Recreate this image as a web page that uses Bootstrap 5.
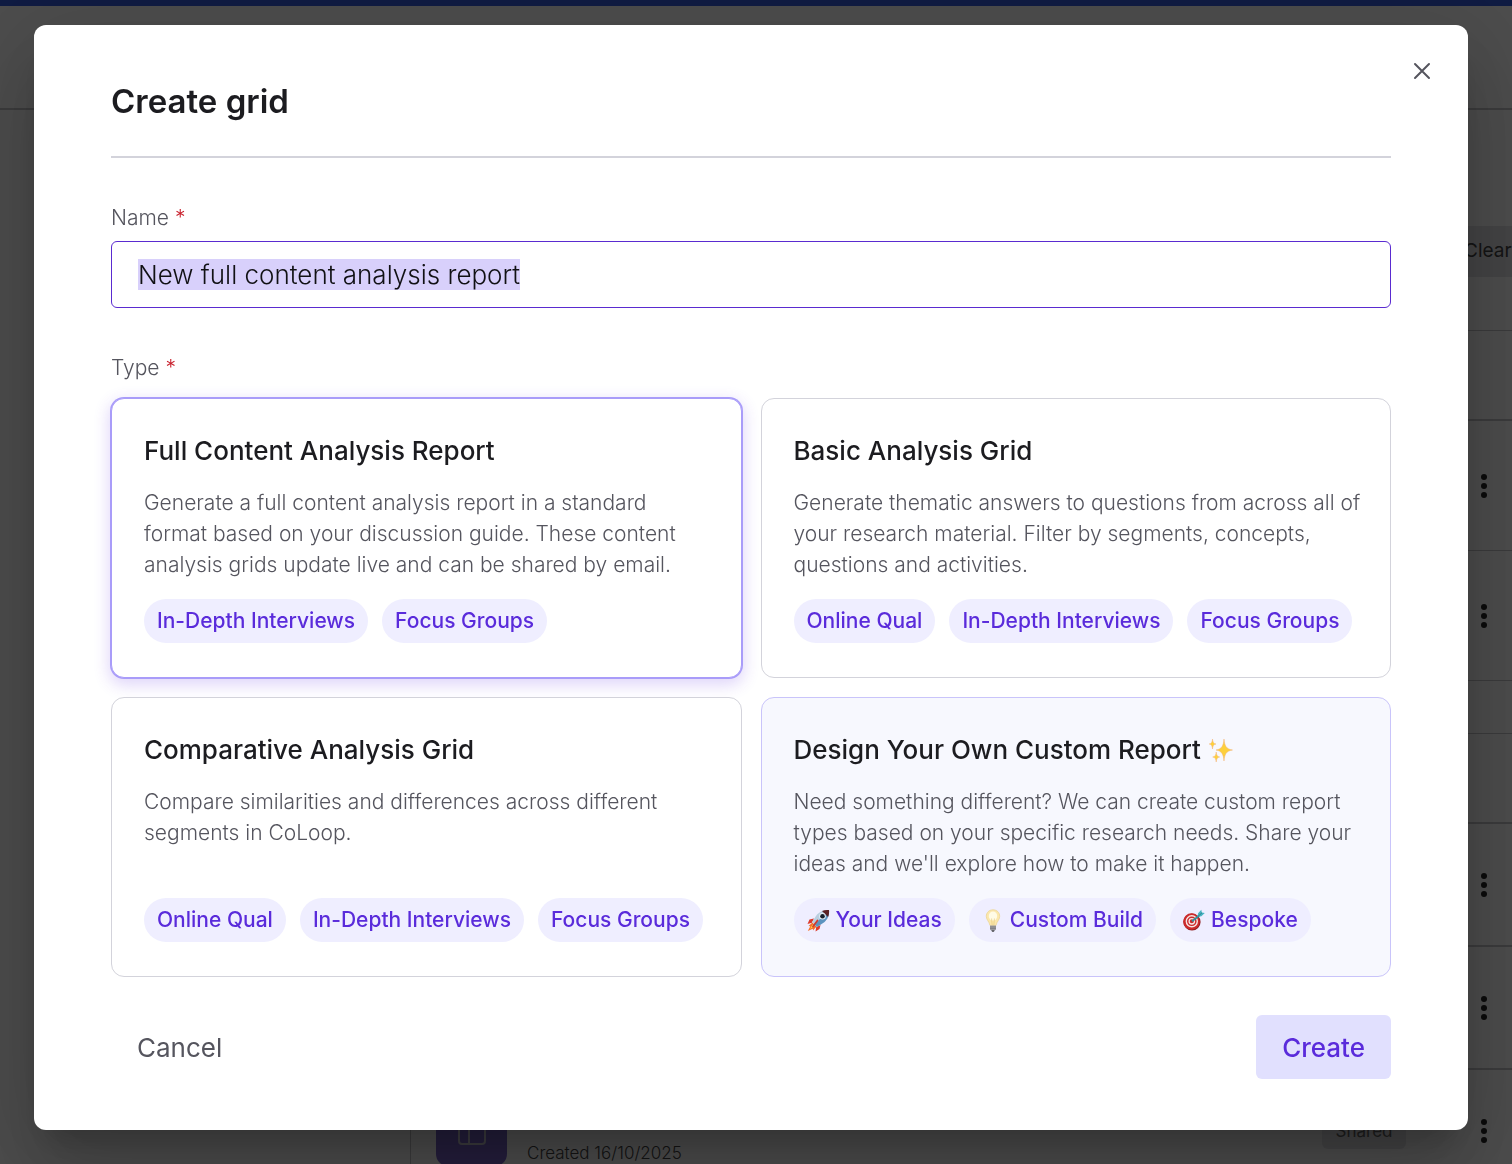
<!DOCTYPE html>
<html lang="en">
<head>
<meta charset="utf-8">
<meta name="viewport" content="width=device-width, initial-scale=1">
<title>Create grid</title>
<link href="https://cdn.jsdelivr.net/npm/bootstrap@5.3.0/dist/css/bootstrap.min.css" rel="stylesheet">
<style>
  body { font-family: Inter, "Noto Sans", sans-serif; color: #1c1c20; }
  ::selection { background: #d8d0fb; color: #111114; }

  /* page behind the dialog */
  .app-page { height: 100vh; overflow: hidden; background: #fff; }
  .app-strip { height: 6px; background: #355adc; }
  .app-header { height: 104px; border-bottom: 2px solid #c4c4c8; }
  .app-side { width: 410px; }
  .app-main { border-left: 1px solid #c4c4c8; }
  .app-tools { height: 221px; border-bottom: 1px solid #c4c4c8; padding-top: 116px; }
  .btn-clear { width: 62px; height: 51px; padding: 0 0 0 14px; background: #e2e2e6; color: #444; font-size: 19px; text-align: left; border: 0; border-radius: 6px 0 0 6px; }
  .line-head { height: 90px; border-bottom: 2px solid #c4c4c8; }
  .line-gap { height: 53px; border-bottom: 1px solid #c4c4c8; }
  .line-item { height: 130px; border-bottom: 1px solid #c4c4c8; padding: 0 12px 0 25px; }
  .line-short { height: 123px; border-bottom: 2px solid #c4c4c8; }
  .btn-dots { width: 32px; height: 40px; padding: 0; border: 0; line-height: 1; }
  .grid-tile { width: 71px; height: 70px; border-radius: 12px; background: #7963c9; }
  .created-on { font-size: 17px; line-height: 20px; font-weight: 300; color: #444; padding-top: 44px; }
  .tag-shared { width: 84px; height: 36px; line-height: 36px; background: #e6e6ea; color: #666; font-size: 17px; border-radius: 6px; margin-right: 62px; }

  /* dialog */
  .modal-backdrop.show { opacity: .7; }
  .modal-dialog { max-width: none; margin: 25px 44px 25px 34px; }
  .modal-content { border: 0; border-radius: 12px; padding: 56px 77px 51px; color: #1c1c20;
    box-shadow: 0 22px 30px -14px rgba(0,0,0,.2), 0 48px 76px 6px rgba(0,0,0,.14), 0 18px 92px 16px rgba(0,0,0,.12); }
  .dialog-head { border-bottom: 2px solid #d3d3db; padding-bottom: 35px; }
  .dialog-title { font-size: 33px; line-height: 40px; font-weight: 600; margin: 0; }
  .btn-x { top: 30px; right: 30px; width: 32px; height: 32px; padding: 0; border: 0; line-height: 1; }
  .field-label { font-size: 21px; line-height: 32px; font-weight: 300; color: #55555e; margin: 44px 0 7px; }
  .type-set { margin-top: 44px; }
  .type-label { margin: 0 0 14px; }
  .req { color: #c8202c; }
  .name-input, .name-input:focus { height: 67px; padding: 0 26px; font-size: 26px; font-weight: 300; color: #111114; border: 1px solid #5a2bd0; border-radius: 6px; box-shadow: none; }

  .type-grid { grid-template-columns: 1fr 1fr; gap: 19px; }
  .type-card { padding: 34px 28px 34px 32px; border: 1px solid #d3d3db; border-radius: 13px; cursor: pointer; background: #fff; }
  .btn-check:checked + .type-card { border-color: #a99cf9; box-shadow: 0 0 0 1px #a99cf9, 0 5px 16px 2px rgba(94,43,224,.2); }
  .type-custom { background: #f7f8fe; border-color: #c9c4fa; }
  .type-name { font-size: 26px; line-height: 36px; font-weight: 500; }
  .type-text { font-size: 21px; line-height: 31px; font-weight: 300; color: #55555e; margin: 18px 0 19px; }
  .pill-row { gap: 14px; }
  .pill { font-size: 21px; line-height: 44px; font-weight: 500; color: #5a2bdb; background: #efeeff; border-radius: 22px; padding: 0 13px; white-space: nowrap; }
  .pill svg { margin-right: 6px; }

  .dialog-foot { margin-top: 38px; }
  .btn-foot { height: 64px; padding: 0 26px; font-size: 26px; border: 0; border-radius: 6px; }
  .btn-cancel, .btn-cancel:hover { color: #55555e; font-weight: 400; }
  .btn-create, .btn-create:hover { color: #5a2bdb; background: #e1e0fe; font-weight: 500; }
</style>
</head>
<body>

<svg width="0" height="0" class="position-absolute" aria-hidden="true">
  <symbol id="dots" viewBox="0 0 8 26"><circle cx="4" cy="4" r="3"/><circle cx="4" cy="13" r="3"/><circle cx="4" cy="22" r="3"/></symbol>
</svg>

<div class="app-page d-flex flex-column" aria-hidden="true">
  <div class="app-strip flex-shrink-0"></div>
  <header class="app-header flex-shrink-0"></header>
  <div class="d-flex flex-grow-1">
    <aside class="app-side flex-shrink-0"></aside>
    <main class="app-main flex-grow-1">
      <div class="app-tools d-flex justify-content-end align-items-start"><button type="button" class="btn btn-clear" tabindex="-1">Clear</button></div>
      <div class="line-head"></div>
      <div class="line-item d-flex align-items-center justify-content-end"><button type="button" class="btn btn-dots" tabindex="-1" aria-label="More"><svg width="8" height="26" fill="#222"><use href="#dots"/></svg></button></div>
      <div class="line-item d-flex align-items-center justify-content-end"><button type="button" class="btn btn-dots" tabindex="-1" aria-label="More"><svg width="8" height="26" fill="#222"><use href="#dots"/></svg></button></div>
      <div class="line-gap"></div>
      <div class="line-head"></div>
      <div class="line-item line-short d-flex align-items-center justify-content-end"><button type="button" class="btn btn-dots" tabindex="-1" aria-label="More"><svg width="8" height="26" fill="#222"><use href="#dots"/></svg></button></div>
      <div class="line-item line-short d-flex align-items-center justify-content-end"><button type="button" class="btn btn-dots" tabindex="-1" aria-label="More"><svg width="8" height="26" fill="#222"><use href="#dots"/></svg></button></div>
      <div class="line-item line-short d-flex align-items-center">
        <div class="grid-tile d-flex align-items-center justify-content-center flex-shrink-0"><svg width="28" height="28" viewBox="0 0 28 28" fill="none" stroke="#c9c9d4" stroke-width="2"><rect x="1" y="1" width="26" height="26" rx="3"/><path d="M1 10h26M11 10v17"/></svg></div>
        <div class="created-on flex-grow-1 ps-3 ms-1">Created 16/10/2025</div>
        <span class="tag-shared text-center">Shared</span>
        <button type="button" class="btn btn-dots" tabindex="-1" aria-label="More"><svg width="8" height="26" fill="#222"><use href="#dots"/></svg></button>
      </div>
    </main>
  </div>
</div>

<div class="modal-backdrop show"></div>

<div class="modal d-block" tabindex="-1" role="dialog" aria-modal="true" aria-labelledby="dialogTitle">
  <div class="modal-dialog">
    <form class="modal-content" onsubmit="return false">
      <button type="button" class="btn btn-x position-absolute" aria-label="Close"><svg width="18" height="18" viewBox="0 0 18 18" fill="none" stroke="#55555e" stroke-width="2" stroke-linecap="round"><path d="M2 2l14 14M16 2L2 16"/></svg></button>
      <div class="dialog-head"><h1 class="dialog-title" id="dialogTitle">Create grid</h1></div>

      <label class="field-label" for="gridName">Name <span class="req">*</span></label>
      <input class="form-control name-input" id="gridName" type="text" value="New full content analysis report" autocomplete="off" spellcheck="false" required>

      <fieldset class="type-set">
        <legend class="field-label type-label">Type <span class="req">*</span></legend>
        <div class="type-grid d-grid">
          <input class="btn-check" type="radio" name="gridType" id="typeFull" checked>
          <label class="type-card d-flex flex-column" for="typeFull">
            <span class="type-name">Full Content Analysis Report</span>
            <span class="type-text">Generate a full content analysis report in a standard format based on your discussion guide. These content analysis grids update live and can be shared by email.</span>
            <span class="pill-row d-flex mt-auto"><span class="pill">In-Depth Interviews</span><span class="pill">Focus Groups</span></span>
          </label>

          <input class="btn-check" type="radio" name="gridType" id="typeBasic">
          <label class="type-card d-flex flex-column" for="typeBasic">
            <span class="type-name">Basic Analysis Grid</span>
            <span class="type-text">Generate thematic answers to questions from across all of your research material. Filter by segments, concepts, questions and activities.</span>
            <span class="pill-row d-flex mt-auto"><span class="pill">Online Qual</span><span class="pill">In-Depth Interviews</span><span class="pill">Focus Groups</span></span>
          </label>

          <input class="btn-check" type="radio" name="gridType" id="typeCompare">
          <label class="type-card d-flex flex-column" for="typeCompare">
            <span class="type-name">Comparative Analysis Grid</span>
            <span class="type-text">Compare similarities and differences across different segments in CoLoop.</span>
            <span class="pill-row d-flex mt-auto"><span class="pill">Online Qual</span><span class="pill">In-Depth Interviews</span><span class="pill">Focus Groups</span></span>
          </label>

          <input class="btn-check" type="radio" name="gridType" id="typeCustom">
          <label class="type-card type-custom d-flex flex-column" for="typeCustom">
            <span class="type-name d-flex align-items-center gap-2">Design Your Own Custom Report
              <svg width="24" height="24" viewBox="0 0 24 24" fill="#fdd03c" stroke="#f3b27a" stroke-width=".5" aria-hidden="true">
                <path d="M15 1c.7 6.600 1.900 10 8.500 11-6.600 1-7.800 4.400-8.500 11-.7-6.600-1.900-10-8-11 6.100-1 7.300-4.400 8-11z"/>
                <path d="M3.500 1c.3 3 .9 4.400 3.500 5-2.600.6-3.200 2-3.500 5-.3-3-.9-4.400-3.300-5 2.400-.6 3-2 3.300-5z"/>
                <path d="M7.200 14c.3 3 .9 4.400 3.500 5-2.600.6-3.200 2-3.500 5-.3-3-.9-4.400-3.500-5 2.600-.6 3.200-2 3.500-5z"/>
              </svg>
            </span>
            <span class="type-text">Need something different? We can create custom report types based on your specific research needs. Share your ideas and we'll explore how to make it happen.</span>
            <span class="pill-row d-flex mt-auto">
              <span class="pill d-flex align-items-center">
                <svg width="23" height="23" viewBox="0 0 23 23" aria-hidden="true">
                  <path d="M7 9.500L2.500 10.500.5 15l4.500-1.200zM13.500 16l-1 4-4 2.500.8-4.800z" fill="#dc3a2c"/>
                  <path d="M5.500 13.500L1.500 17l1.800.2L.8 22l5-2.300.2 1.800 3.500-4z" fill="#f5702a"/>
                  <path d="M5.500 15.500L3 20l4.300-2.700z" fill="#ffd84d"/>
                  <path d="M22 1c-5-.5-9 1.500-12 4.500L5 13l5 5 7.500-5C20.500 10 22.500 6 22 1z" fill="#b9cfe0"/>
                  <path d="M22 1c.5 5-1.500 9-4.500 12L10 18l-2.500-2.500L19 4z" fill="#5c93bf"/>
                  <path d="M22 1c-2.600-.3-5 .1-7 .9l6.100 6.100c.8-2.200 1.200-4.500.9-7z" fill="#5a2022"/>
                  <circle cx="15.500" cy="7.300" r="3.300" fill="#e6eef5"/><circle cx="15.500" cy="7.300" r="2.300" fill="#17202b"/>
                  <path d="M10.500 11.500l-4.500 6" stroke="#cf3b2f" stroke-width="1.800" stroke-linecap="round"/>
                </svg>Your Ideas</span>
              <span class="pill d-flex align-items-center">
                <svg width="22" height="23" viewBox="0 0 22 23" aria-hidden="true">
                  <path d="M11 .8c-4.200 0-6.700 3-6.700 6.500 0 3.700 2.900 4.900 3.700 9.200h6c.8-4.300 3.700-5.500 3.700-9.200C17.700 3.800 15.200.8 11 .8z" fill="#fbe7ad" stroke="#ecd596" stroke-width=".8"/>
                  <ellipse cx="11" cy="7" rx="4.200" ry="4.600" fill="#fffbe6"/>
                  <path d="M9.600 9.500l.6 7M12.400 9.500l-.6 7" stroke="#e5cb80" stroke-width=".7"/>
                  <path d="M8 16.500h6v3.600c0 .8-.8 1.300-1.500 1.300h-3c-.7 0-1.500-.5-1.500-1.300z" fill="#a2a2a5"/>
                  <path d="M8 18h6M8 19.700h6" stroke="#6d6d72" stroke-width=".7"/>
                  <path d="M9.300 21.200h3.400l-.8 1.500h-1.800z" fill="#444448"/>
                </svg>Custom Build</span>
              <span class="pill d-flex align-items-center">
                <svg width="22" height="22" viewBox="0 0 22 22" aria-hidden="true">
                  <circle cx="9" cy="13" r="8.600" fill="#8e1f20"/>
                  <circle cx="8.500" cy="12.500" r="8.300" fill="#cc2b2c"/>
                  <circle cx="8.800" cy="12.300" r="5.500" fill="none" stroke="#f6e6e4" stroke-width="1.400"/>
                  <circle cx="8.800" cy="12.300" r="2.700" fill="none" stroke="#f6e6e4" stroke-width="1.300"/>
                  <path d="M9 12.300L17 6" stroke="#2f8f9b" stroke-width="1.800"/>
                  <path d="M14.500 7.800l.6-3.600L18.300.8l.5 2.700 3 .6-3.400 3.200z" fill="#46b4c1"/>
                  <path d="M15 7.400l4-3.700" stroke="#23707c" stroke-width=".8"/>
                </svg>Bespoke</span>
            </span>
          </label>
        </div>
      </fieldset>

      <div class="dialog-foot d-flex justify-content-between">
        <button type="button" class="btn btn-foot btn-cancel">Cancel</button>
        <button type="submit" class="btn btn-foot btn-create">Create</button>
      </div>
    </form>
  </div>
</div>

<script src="https://cdn.jsdelivr.net/npm/bootstrap@5.3.0/dist/js/bootstrap.bundle.min.js"></script>
<script>
  // The name is preselected, so that typing replaces it.
  const nameInput = document.getElementById('gridName');
  nameInput.focus();
  nameInput.select();
</script>
</body>
</html>
